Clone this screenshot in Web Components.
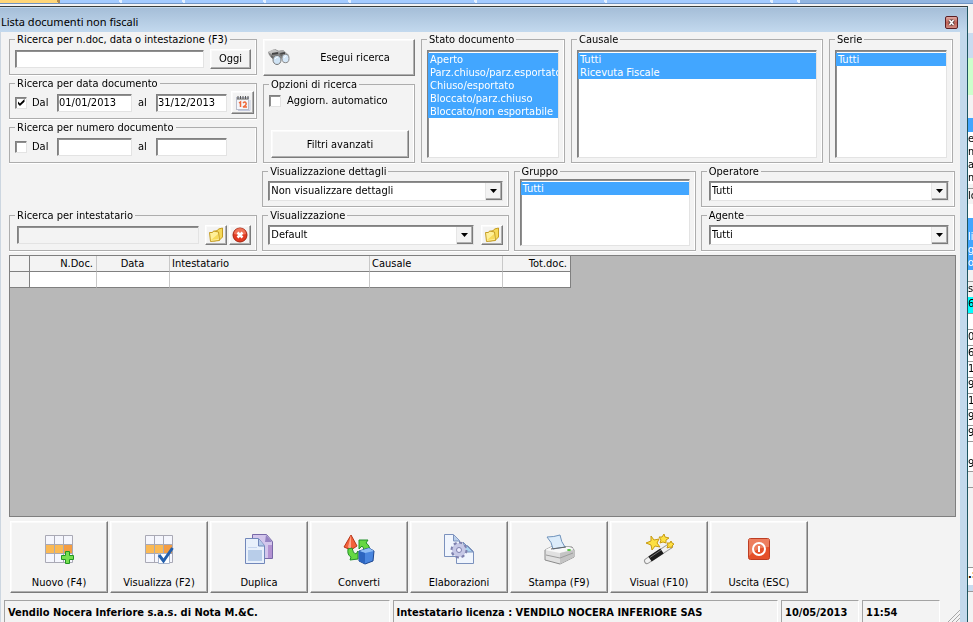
<!DOCTYPE html>
<html lang="it">
<head>
<meta charset="utf-8">
<title>Lista documenti non fiscali</title>
<style>
  html, body {
    margin: 0;
    height: 100%;
  }

  body {
    overflow: hidden;
    background: #f3f3f3;
    color: #000;
    font: 11px/13px "DejaVu Sans Condensed", "DejaVu Sans", sans-serif;
  }
</style>
</head>
<body>
<app-desktop>
  <mdi-window caption="Lista documenti non fiscali">
    <search-form></search-form>
    <doc-grid></doc-grid>
    <tool-row></tool-row>
    <status-bar>
      <span slot="company">Vendilo Nocera Inferiore s.a.s. di Nota M.&amp;C.</span>
      <span slot="licence">Intestatario licenza : VENDILO NOCERA INFERIORE SAS</span>
      <span slot="date">10/05/2013</span>
      <span slot="time">11:54</span>
    </status-bar>
  </mdi-window>
</app-desktop>

<script>
const ICONS = {
  binoculars: `<svg width="24" height="20" viewBox="0 0 24 20">
    <path d="M1 4l7-3 4 2 4-1 6 6-2 5-7-3-5 3-6-6z" fill="#8a8a8a"/>
    <path d="M1 4l6-3 5 3-6 3z" fill="#c4c4c4"/><path d="M10 3l6-1 6 5-5 1z" fill="#aaa"/>
    <path d="M5 6l6-1M13 6l5-1" stroke="#444" stroke-width="2"/>
    <path d="M4 8l5 4M13 6l4 3" stroke="#666" stroke-width="2"/>
    <ellipse cx="10" cy="12" rx="4" ry="4.500" fill="#cfe3f4" stroke="#777"/>
    <ellipse cx="18.500" cy="10.500" rx="3.500" ry="4.200" fill="#d6e8f8" stroke="#888"/>
    <path d="M8 11q1-2 3-2M17 10q1-2 2-2" stroke="#fff" fill="none"/></svg>`,
  calendar: `<svg width="16" height="16" viewBox="0 0 16 16">
    <rect x="1.500" y="2.500" width="12" height="12" fill="#f4f6fb" stroke="#b9bdca"/>
    <path d="M2 3h11v2H2z" fill="#aaa"/><path d="M3 1v3M5.500 1v3M8 1v3M10.500 1v3M13 1v3" stroke="#555"/>
    <path d="M4 8l1.500-1v5M8 8q2-2 3 0t-3 4h4" stroke="#ee6a3c" stroke-width="1.500" fill="none"/>
    <path d="M3 15.500h12V5" stroke="#c4c9de" fill="none"/></svg>`,
  folder: `<svg width="16" height="16" viewBox="0 0 16 16">
    <path d="M5.500 4.500l4-1 1-1.500 4-1v9l-3 3-6 1z" fill="#f6d95a" stroke="#c69d22"/>
    <path d="M1.500 5.500h3l1-1.500 5 1 1 8.500-9 1z" fill="#fff09a" stroke="#c69d22"/>
    <path d="M3 13l7-6v5z" fill="#f7db5c"/></svg>`,
  cancel: `<svg width="16" height="16" viewBox="0 0 16 16">
    <circle cx="8" cy="8" r="7" fill="#e23a22" stroke="#a3230f"/>
    <path d="M2 7a6 6 0 0 1 12 0q-6 2-12 0z" fill="#f58a6d" opacity=".7"/>
    <path d="M5.500 5.500l5 5M10.500 5.500l-5 5" stroke="#fff" stroke-width="2.500"/></svg>`,
  gridAdd: `<svg width="32" height="32" viewBox="0 0 32 32">
    <path d="M2.500 1.500h27v27h-27z" fill="#f5f6fd"/><path d="M2 10.500h28v9H2z" fill="#fbb954"/>
    <path d="M21 10.500h9v9h-9z" fill="#f49d43"/>
    <path d="M2.500 1.500h27v27h-27zM11.500 1.500v27M20.500 1.500v27M2 10.500h28M2 19.500h28" fill="none" stroke="#a9a9b5"/>
    <path d="M22.500 17.500h4v4h4v4h-4v4h-4v-4h-4v-4h4z" fill="#77df50" stroke="#229522"/></svg>`,
  gridCheck: `<svg width="32" height="32" viewBox="0 0 32 32">
    <path d="M2.500 1.500h27v27h-27z" fill="#f5f6fd"/><path d="M2 10.500h28v9H2z" fill="#fbb954"/>
    <path d="M21 10.500h9v9h-9z" fill="#f49d43"/>
    <path d="M2.500 1.500h27v27h-27zM11.500 1.500v27M20.500 1.500v27M2 10.500h28M2 19.500h28" fill="none" stroke="#a9a9b5"/>
    <path d="M15.500 19.500h11v10h-11z" fill="#fff" stroke="#a9b5cc"/>
    <path d="M16 21l4.500 6L29.500 14" fill="none" stroke="#2460ad" stroke-width="3"/></svg>`,
  copies: `<svg width="32" height="32" viewBox="0 0 32 32">
    <path d="M9.500.5h14l6 7v17h-20z" fill="#d3c6ec" stroke="#7869a8"/><path d="M23 1l-1 7h7z" fill="#9583c3"/>
    <path d="M25 11h4v13h-4z" fill="#b392d2"/>
    <path d="M2.500 4.500h13l6 7v18h-19z" fill="#e8f0fb" stroke="#7187ba"/>
    <path d="M15.500 5v7h6" fill="#b4c9ea" stroke="#7187ba"/><path d="M5 16h14v11H5z" fill="#b8cde9"/>
    <path d="M5 13.500h9" stroke="#c6d5ee"/></svg>`,
  convert: `<svg width="32" height="32" viewBox="0 0 32 32">
    <path d="M8 1L1 13l7 3 6-4z" fill="#f3613a" stroke="#b7361a"/><path d="M8 1L5 13l3 3z" fill="#ffa78b"/>
    <path d="M16 6h9l-2 3q5 3 3 10l-5-1q0-5-2-6l-3 3z" fill="#65d842" stroke="#22912a"/>
    <path d="M5 15l4-1q1 6 4 6l2-3v8l-8 1 1-3q-4-2-3-8z" fill="#65d842" stroke="#22912a"/>
    <path d="M16 17l10-3 5 3-1 10-8 3-6-3z" fill="#4a86df" stroke="#1c4690"/>
    <path d="M16 17l6 2 9-2-5-3z" fill="#8fbdf6"/><path d="M16 17l6 2v11l-6-3z" fill="#2d65c0"/></svg>`,
  process: `<svg width="32" height="32" viewBox="0 0 32 32">
    <path d="M1.500.5h9l6 6v16h-15z" fill="#f0f5fd" stroke="#7b91bd"/><path d="M10.500 1v6h6" fill="#b9ceea" stroke="#7b91bd"/>
    <path d="M13.500 11.500h11l6 6v12h-17z" fill="#f0f5fd" stroke="#7b91bd"/>
    <path d="M20 8l10 10h-7z" fill="#a8d2ef" stroke="#7b91bd"/>
    <circle cx="16" cy="16" r="7" fill="#c6c8e6" stroke="#7d80ae" stroke-width="3" stroke-dasharray="3 2.500"/>
    <circle cx="16" cy="16" r="6.500" fill="#c6c8e6"/><circle cx="16" cy="16" r="2.500" fill="#eef" stroke="#7d80ae"/></svg>`,
  printer: `<svg width="32" height="32" viewBox="0 0 32 32">
    <path d="M2 16l8-4 19 1 2 3v7l-14 7-15-4z" fill="#e0e0e0" stroke="#8b8b8b"/>
    <path d="M2 16l15 3 14-4-5-2-16-1z" fill="#f8f8f8"/><path d="M17 19v11l14-7v-7z" fill="#c4c4c4"/>
    <path d="M3 21l14 3 13-5" stroke="#9c9c9c" fill="none"/>
    <path d="M4 3q7 0 13-2 1 7 5 12l-12 2Q9 8 4 3z" fill="#dcecfa" stroke="#6f93bc"/>
    <path d="M8 15l15-2" stroke="#666"/><ellipse cx="26" cy="16" rx="2" ry="1" fill="#4fc33c"/></svg>`,
  wand: `<svg width="32" height="32" viewBox="0 0 32 32">
    <path d="M4 27L27 12" stroke="#999" stroke-width="6" stroke-linecap="round"/>
    <path d="M4 27L27 12" stroke="#f2f2f2" stroke-width="4" stroke-linecap="round"/>
    <path d="M7 25L19 17" stroke="#1c1c1c" stroke-width="6"/><path d="M7 23.500L18 16" stroke="#777"/>
    <g fill="#fde043" stroke="#c79a12"><path d="M8 2l3 4 5-1-2 4 3 4-5-1-3 4-1-5-5-2 5-2z"/>
    <path d="M21 0l1 3 4 1-3 2v3l-3-1-3 1 1-3-2-3h3z"/><path d="M28 7l1 2 2 1-2 2v2l-2-1-3 1 1-3-1-2h3z"/></g></svg>`,
  power: `<svg width="32" height="32" viewBox="0 0 32 32">
    <rect x="5.500" y="4.500" width="21" height="21" rx="2" fill="#e55029" stroke="#bd3d22"/>
    <path d="M6 5h20v8Q14 13 6 22z" fill="#ef8a6c" opacity=".8"/>
    <circle cx="16" cy="15" r="6" fill="none" stroke="#fff" stroke-width="2"/>
    <path d="M16 12v6" stroke="#fff" stroke-width="2"/></svg>`,
};

// rules shared by every raised button
const BUTTON_CSS = `
  button {
    box-sizing: border-box;
    margin: 0;
    padding: 0;
    font: inherit;
    color: inherit;
    background: #f3f3f3;
    border: 1px solid;
    border-color: #fff #7b7b7b #7b7b7b #fff;
    box-shadow: inset -1px -1px #b0b0b0, inset 1px 1px #fafafa;
  }
`;

class BaseElement extends HTMLElement {
  constructor() {
    super();
    this.root = this.attachShadow({ mode: 'open' });
  }

  connectedCallback() {
    this.root.innerHTML = this.render();
  }

  attr(name) {
    return this.getAttribute(name) || '';
  }
}

class AppDesktop extends BaseElement {
  render() {
    const tabs = [60, 62, 63, 81, 85, 126, 130, 166, 27];
    // rows of the window behind, only its first pixels can be seen
    const rows = [
      ['', 27, ''], ['', 25, 'head'], ['', 37, 'green'], ['', 23, ''], ['', 14, 'blue'],
      ['e', 13, 'w'], ['m', 13, 'w'], ['a', 13, 'w'], ['m', 13, 'w'], ['', 4, ''],
      ['lo', 16, 'line'], ['', 14, 'w'], ['', 12, 'blue'], ['li', 13, 'blue'], ['g', 13, 'blue'],
      ['on', 14, 'blue'], ['', 11, ''], ['sp', 16, 'line'], ['6', 16, 'cyan'], ['', 16, 'w line'],
      ['0', 16, 'w line'], ['6', 16, 'w line'], ['1', 16, 'w line'], ['9', 16, 'w line'],
      ['1', 16, 'w line'], ['9', 16, 'w line'], ['9', 16, 'w line'], ['', 16, 'w line'],
      ['9', 14, 'w'], ['', 16, 'line'], ['', 80, 'line'], ['.:', 18, 'w bold line'],
      ['', 6, 'head'], ['', 14, 'line'],
    ];
    return `
      <style>
        :host {
          display: flex;
          flex-direction: column;
          height: 100vh;
        }
        .tabs {
          display: flex;
          height: 3px;
          background: #92b5e0;
          border-bottom: 1px solid #6f94c4;
          margin-bottom: 2px;
        }
        .tabs i {
          background: linear-gradient(60deg, #a4cbff calc(100% - 3px), #e4f0ff 0);
        }
        .tabs i:first-child {
          background: linear-gradient(60deg, #ffd678 calc(100% - 3px), #b08a50 0);
        }
        .body {
          display: flex;
          flex: 1;
          min-height: 0;
        }
        slot { display: contents; }
        .behind {
          width: 5px;
          overflow: hidden;
        }
        .behind div {
          box-sizing: border-box;
          overflow: hidden;
          white-space: nowrap;
        }
        .w { background: #fff; }
        .head { background: #c9dcf0; }
        .green { background: #ccffcc; }
        .blue { background: #42a6ff; color: #fff; }
        .cyan { background: #0ff; }
        .line { border-top: 1px solid #999; }
        .bold { font-weight: bold; }
      </style>
      <div class="tabs">${tabs.map(w => `<i style="width:${w}px"></i>`).join('')}</div>
      <div class="body">
        <slot></slot>
        <div class="behind">
          ${rows.map(r => `<div class="${r[2]}" style="height:${r[1]}px">${r[0]}</div>`).join('')}
        </div>
      </div>`;
  }
}

class MdiWindow extends BaseElement {
  render() {
    return `
      <style>
        :host {
          display: flex;
          flex-direction: column;
          flex: 1;
          min-width: 0;
          box-sizing: border-box;
          border-top: 1px solid #383c3c;
          border-right: 1px solid #1e5560;
          background: #c3d9ec;
        }
        header {
          display: flex;
          align-items: center;
          justify-content: space-between;
          box-sizing: border-box;
          height: 24px;
          margin-top: 1px;
          padding: 4px 9px 0 1px;
          background: linear-gradient(#a5bed8, #c3d9ee);
          font: 11px/16px "Noto Sans", "Open Sans", sans-serif;
        }
        button {
          display: flex;
          padding: 0;
          border: 1px solid #5b1f24;
          border-radius: 2px;
          background: linear-gradient(#e0aaa4, #c06458 50%, #cf8a80);
        }
        main {
          display: flex;
          flex-direction: column;
          flex: 1;
          min-height: 0;
          margin-right: 7px;
          background: #f3f3f3;
          border-left: 1px solid #ccd6e0;
        }
      </style>
      <header>
        <span>${this.attr('caption')}</span>
        <button aria-label="Chiudi">
          <svg width="11" height="11" viewBox="0 0 11 11"><path d="M3.500 3l4 5M7.500 3l-4 5" stroke="#5b4040" stroke-width="3.500"/><path d="M3.500 3l4 5M7.500 3l-4 5" stroke="#fff" stroke-width="1.500"/></svg>
        </button>
      </header>
      <main><slot></slot></main>`;
  }
}

class GroupBox extends BaseElement {
  render() {
    return `
      <style>
        :host {
          display: flex;
          min-width: 0;
        }
        fieldset {
          flex: 1;
          display: flex;
          box-sizing: border-box;
          min-width: 0;
          margin: 0;
          padding: 1px 5px 4px;
          border: 1px solid #adadad;
          box-shadow: inset -1px 0 #fff, 0 1px #fff;
        }
        legend {
          margin-left: 0;
          padding: 0 2px;
          white-space: nowrap;
        }
        .row {
          flex: 1;
          display: flex;
          align-items: center;
          min-width: 0;
          min-height: 23px;
        }
        :host([stack]) .row {
          flex-direction: column;
          align-items: stretch;
          justify-content: space-between;
        }
      </style>
      <fieldset>
        <legend>${this.attr('legend')}</legend>
        <div class="row"><slot></slot></div>
      </fieldset>`;
  }
}

class ListBox extends BaseElement {
  render() {
    const items = this.attr('items').split('|');
    return `
      <style>
        :host {
          display: flex;
          flex: 1;
          align-self: stretch;
          min-width: 0;
        }
        select {
          flex: 1;
          min-width: 0;
          width: 100%;
          height: 100%;
          box-sizing: border-box;
          margin: 0;
          padding: 2px 0 0;
          overflow: hidden;
          font: inherit;
          background: #fff;
          border: 1px solid;
          border-color: #808080 #e3e3e3 #e3e3e3 #808080;
          border-radius: 0;
          box-shadow: inset 1px 1px #8f8f8f;
          outline: none;
        }
        option {
          min-height: 13px;
          height: 13px;
          padding: 0 2px;
          white-space: nowrap;
        }
        option:checked {
          background: linear-gradient(#42a6ff, #42a6ff);
          color: #fff;
          -webkit-text-fill-color: #fff;
        }
      </style>
      <select multiple size="2" aria-label="${this.attr('label')}">
        ${items.map(t => `<option selected>${t}</option>`).join('')}
      </select>`;
  }
}

class ComboBox extends BaseElement {
  render() {
    return `
      <style>
        :host {
          display: grid;
          flex: 1;
          min-width: 0;
          box-sizing: border-box;
          height: 20px;
          background: #fff;
          border: 1px solid;
          border-color: #808080 #e3e3e3 #e3e3e3 #808080;
          box-shadow: inset 1px 1px #8f8f8f;
        }
        select, span { grid-area: 1 / 1; }
        select {
          appearance: none;
          min-width: 0;
          margin: 0;
          padding: 0 18px 0 2px;
          border: 0;
          background: none;
          font: inherit;
          color: inherit;
        }
        span {
          display: flex;
          align-items: center;
          justify-content: center;
          justify-self: end;
          width: 15px;
          margin-top: 1px;
          background: #f3f3f3;
          border-right: 1px solid #7b7b7b;
          border-bottom: 1px solid #7b7b7b;
          box-shadow: inset -1px -1px #b0b0b0, -1px 0 #e6e6e6;
          pointer-events: none;
        }
      </style>
      <select aria-label="${this.attr('label')}"><option>${this.attr('value')}</option></select>
      <span><svg width="7" height="4" viewBox="0 0 7 4"><path d="M0 0h7L3.500 4z"/></svg></span>`;
  }
}

class IconButton extends BaseElement {
  render() {
    return `
      <style>
        :host { display: block; }
        ${BUTTON_CSS}
        button {
          display: flex;
          align-items: center;
          justify-content: center;
          width: 22px;
          height: 20px;
        }
        :host([tall]) button {
          width: 23px;
          height: 23px;
        }
      </style>
      <button aria-label="${this.attr('label')}">${ICONS[this.attr('icon')]}</button>`;
  }
}

class SearchForm extends BaseElement {
  connectedCallback() {
    super.connectedCallback();
    this.root.querySelector('#query').focus();
  }

  render() {
    return `
      <style>
        :host {
          display: flex;
          flex-direction: column;
          gap: 2px;
          padding: 1px 5px 0 8px;
        }
        ${BUTTON_CSS}
        .top, .bottom { display: grid; }
        .top {
          grid-template-columns: 248fr 152fr 144fr 252fr 124fr;
          column-gap: 6px;
          margin-right: 2px;
        }
        .top list-box { margin-top: 3px; }
        .bottom {
          grid-template-columns: 248fr 246fr 182fr 254fr;
          column-gap: 5px;
        }
        .col {
          display: flex;
          flex-direction: column;
          gap: 2px;
          min-width: 0;
        }
        .col.low { justify-content: flex-end; }
        input[type=text] {
          box-sizing: border-box;
          min-width: 0;
          height: 18px;
          margin: 0;
          padding: 0 1px;
          font: inherit;
          color: inherit;
          background: #fff;
          border: 1px solid;
          border-color: #808080 #e3e3e3 #e3e3e3 #808080;
          box-shadow: inset 1px 1px #8f8f8f;
          outline: none;
        }
        input[type=text].off { background: #f3f3f3; margin: 0 6px 0 2px; }
        input[type=checkbox] {
          appearance: none;
          display: grid;
          place-items: center;
          flex: none;
          box-sizing: border-box;
          width: 12px;
          height: 12px;
          margin: 0;
          background: #fff;
          border: 1px solid;
          border-color: #808080 #e3e3e3 #e3e3e3 #808080;
          box-shadow: inset 1px 1px #8f8f8f;
        }
        input[type=checkbox]:checked::before {
          content: "";
          width: 7px;
          height: 7px;
          background: #000;
          clip-path: polygon(0 30%, 35% 65%, 100% 0, 100% 40%, 35% 100%, 0 65%);
        }
        .grow { flex: 1; }
        .date { flex: none; width: 75px; }
        .date.to { width: 71px; }
        .dal, .al { flex: none; box-sizing: border-box; }
        .dal { width: 30px; padding-left: 5px; }
        .al { width: 24px; padding-left: 6px; }
        .check { display: flex; align-items: center; gap: 6px; padding-top: 2px; }
        .today { width: 41px; height: 20px; margin: 0 0 0 6px; }
        .run {
          display: grid;
          grid-template-columns: 32px 1fr;
          align-items: center;
          height: 37px;
          margin: 6px 0 0;
        }
        .run svg { margin-left: 3px; }
        .filters { height: 28px; margin: 0 0 0 2px; }
        .options { flex: 1; }
        .right combo-box { margin-left: 2px; }
        icon-button { margin-left: 4px; }
        combo-box + icon-button { margin-left: 7px; }
        .off + icon-button { margin-left: 0; }
        icon-button + icon-button { margin-left: 2px; }
      </style>
      <div class="top">
        <div class="col">
          <group-box legend="Ricerca per n.doc, data o intestazione (F3)">
            <input type="text" class="grow" id="query" aria-label="Ricerca per n.doc, data o intestazione">
            <button class="today">Oggi</button>
          </group-box>
          <group-box legend="Ricerca per data documento">
            <input type="checkbox" id="byDate" checked><label class="dal" for="byDate">Dal</label>
            <input type="text" class="date" value="01/01/2013" aria-label="Dal">
            <label class="al" for="dateTo">al</label>
            <input type="text" class="date to" id="dateTo" value="31/12/2013">
            <icon-button tall icon="calendar" label="Calendario"></icon-button>
          </group-box>
          <group-box legend="Ricerca per numero documento">
            <input type="checkbox" id="byNum"><label class="dal" for="byNum">Dal</label>
            <input type="text" class="date" aria-label="Dal numero">
            <label class="al" for="numTo">al</label>
            <input type="text" class="date to" id="numTo">
          </group-box>
        </div>
        <div class="col">
          <button class="run">${ICONS.binoculars}<span>Esegui ricerca</span></button>
          <group-box class="options" stack legend="Opzioni di ricerca">
            <div class="check">
              <input type="checkbox" id="auto"><label for="auto">Aggiorn. automatico</label>
            </div>
            <button class="filters">Filtri avanzati</button>
          </group-box>
        </div>
        <group-box legend="Stato documento">
          <list-box label="Stato documento" items="Aperto|Parz.chiuso/parz.esportato|Chiuso/esportato|Bloccato/parz.chiuso|Bloccato/non esportabile"></list-box>
        </group-box>
        <group-box legend="Causale">
          <list-box label="Causale" items="Tutti|Ricevuta Fiscale"></list-box>
        </group-box>
        <group-box legend="Serie">
          <list-box label="Serie" items="Tutti"></list-box>
        </group-box>
      </div>
      <div class="bottom">
        <div class="col low">
          <group-box legend="Ricerca per intestatario">
            <input type="text" class="grow off" aria-label="Intestatario" readonly>
            <icon-button icon="folder" label="Apri"></icon-button>
            <icon-button icon="cancel" label="Annulla"></icon-button>
          </group-box>
        </div>
        <div class="col">
          <group-box legend="Visualizzazione dettagli">
            <combo-box label="Visualizzazione dettagli" value="Non visualizzare dettagli"></combo-box>
          </group-box>
          <group-box legend="Visualizzazione">
            <combo-box label="Visualizzazione" value="Default"></combo-box>
            <icon-button icon="folder" label="Apri visualizzazione"></icon-button>
          </group-box>
        </div>
        <group-box legend="Gruppo">
          <list-box label="Gruppo" items="Tutti"></list-box>
        </group-box>
        <div class="col right">
          <group-box legend="Operatore">
            <combo-box label="Operatore" value="Tutti"></combo-box>
          </group-box>
          <group-box legend="Agente">
            <combo-box label="Agente" value="Tutti"></combo-box>
          </group-box>
        </div>
      </div>`;
  }
}

class DocGrid extends BaseElement {
  render() {
    return `
      <style>
        :host {
          display: block;
          flex: 1;
          min-height: 0;
          margin: 4px 4px 0 8px;
          background: #b8b8b8;
          border: 1px solid #7f7f7f;
        }
        table {
          border-collapse: separate;
          border-spacing: 0;
          table-layout: fixed;
          width: 561px;
          background: #fff;
        }
        th, td {
          box-sizing: border-box;
          height: 16px;
          padding: 0 3px 0 2px;
          border-right: 1px solid #c8c8c8;
          border-bottom: 1px solid #808080;
          font-weight: normal;
          text-align: left;
          line-height: 14px;
        }
        th { background: #f3f3f3; }
        th:first-child, td:first-child {
          background: #f3f3f3;
          border-right-color: #808080;
        }
        th:last-child, td:last-child { border-right-color: #808080; }
        .num { text-align: right; }
        .mid { text-align: center; }
      </style>
      <table>
        <colgroup><col style="width:20px"><col style="width:67px"><col style="width:73px"><col style="width:200px"><col style="width:133px"><col style="width:68px"></colgroup>
        <thead>
          <tr><th></th><th class="num">N.Doc.</th><th class="mid">Data</th><th>Intestatario</th><th>Causale</th><th class="num">Tot.doc.</th></tr>
        </thead>
        <tbody>
          <tr><td></td><td></td><td></td><td></td><td></td><td></td></tr>
        </tbody>
      </table>`;
  }
}

class ToolButton extends BaseElement {
  render() {
    return `
      <style>
        :host {
          display: block;
          width: 98px;
        }
        ${BUTTON_CSS}
        button {
          display: flex;
          flex-direction: column;
          align-items: center;
          justify-content: space-between;
          width: 100%;
          height: 72px;
          padding: 12px 0 3px;
        }
      </style>
      <button>${ICONS[this.attr('icon')]}<slot></slot></button>`;
  }
}

class ToolRow extends BaseElement {
  render() {
    return `
      <style>
        :host {
          display: flex;
          gap: 2px;
          padding: 4px 0 7px 9px;
        }
      </style>
      <tool-button icon="gridAdd">Nuovo (F4)</tool-button>
      <tool-button icon="gridCheck">Visualizza (F2)</tool-button>
      <tool-button icon="copies">Duplica</tool-button>
      <tool-button icon="convert">Converti</tool-button>
      <tool-button icon="process">Elaborazioni</tool-button>
      <tool-button icon="printer">Stampa (F9)</tool-button>
      <tool-button icon="wand">Visual (F10)</tool-button>
      <tool-button icon="power">Uscita (ESC)</tool-button>`;
  }
}

class StatusBar extends BaseElement {
  render() {
    return `
      <style>
        :host {
          display: grid;
          grid-template-columns: 386fr 386fr 78px 78px 17px;
          column-gap: 3px;
          padding-left: 3px;
          height: 22px;
          font-weight: bold;
        }
        div {
          min-width: 0;
          padding: 5px 0 0 3px;
          border-top: 1px solid #a3a3a3;
          border-left: 1px solid #a3a3a3;
          border-right: 1px solid #fff;
          white-space: nowrap;
        }
        svg { align-self: end; justify-self: end; }
      </style>
      <div><slot name="company"></slot></div>
      <div><slot name="licence"></slot></div>
      <div><slot name="date"></slot></div>
      <div><slot name="time"></slot></div>
      <svg width="12" height="12" viewBox="0 0 12 12"><path d="M0 12L12 0M4 12l8-8M8 12l4-4" stroke="#a8a8a8"/></svg>`;
  }
}

customElements.define('app-desktop', AppDesktop);
customElements.define('mdi-window', MdiWindow);
customElements.define('group-box', GroupBox);
customElements.define('list-box', ListBox);
customElements.define('combo-box', ComboBox);
customElements.define('icon-button', IconButton);
customElements.define('search-form', SearchForm);
customElements.define('doc-grid', DocGrid);
customElements.define('tool-button', ToolButton);
customElements.define('tool-row', ToolRow);
customElements.define('status-bar', StatusBar);
</script>
</body>
</html>
